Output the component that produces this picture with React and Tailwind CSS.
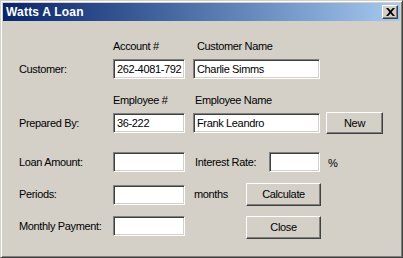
import React from 'react'

const FONT = { fontFamily: '"Liberation Sans", Arial, sans-serif' }

function TextBox({ value = '', width }) {
  return (
    <div
      className={`${width} h-[20px] shrink-0 bg-white border border-t-[#808080] border-l-[#808080] border-b-white border-r-white shadow-[inset_1px_1px_0_#404040,inset_-1px_-1px_0_#d4d0c8] flex items-center pl-[3px] text-[11px] tracking-[-0.35px] text-black overflow-hidden whitespace-nowrap`}
    >
      {value}
    </div>
  )
}

function Button({ children, width, height }) {
  return (
    <div
      className={`${width} ${height} shrink-0 bg-[#d4d0c8] border border-t-white border-l-white border-b-[#404040] border-r-[#404040] shadow-[inset_-1px_-1px_0_#808080] flex items-center justify-center text-[11px] tracking-[-0.35px] text-black`}
    >
      {children}
    </div>
  )
}

export default function App() {
  return (
    <div
      style={FONT}
      className="w-[403px] h-[258px] bg-[#d4d0c8] border border-t-[#d4d0c8] border-l-[#d4d0c8] border-b-[#404040] border-r-[#404040] shadow-[inset_1px_1px_0_#ffffff,inset_-1px_-1px_0_#808080] p-[2px] text-[11px] tracking-[-0.35px] text-black leading-[13px]"
    >
      {/* title bar */}
      <div className="h-[18px] flex items-center justify-between bg-gradient-to-r from-[#0a246a] to-[#a6caf0] pl-[3px] pr-[2px]">
        <span className="text-white font-bold text-[12px] tracking-[0.2px]">Watts A Loan</span>
        <div className="w-[16px] h-[14px] bg-[#d4d0c8] border border-t-white border-l-white border-b-[#404040] border-r-[#404040] shadow-[inset_-1px_-1px_0_#808080] flex items-center justify-center">
          <svg width="9" height="8" viewBox="0 0 9 8">
            <path d="M0 0h2.2l2.3 2.6L6.8 0H9L5.6 4 9 8H6.8L4.5 5.4 2.2 8H0l3.4-4z" fill="#000" />
          </svg>
        </div>
      </div>

      {/* body */}
      <div className="pl-[16px]">
        <div className="flex mt-[19px] h-[13px]">
          <div className="w-[94px]" />
          <div className="w-[84px]">Account #</div>
          <div>Customer Name</div>
        </div>

        <div className="flex items-center mt-[6px] h-[20px]">
          <div className="w-[94px]">Customer:</div>
          <TextBox width="w-[72px]" value="262-4081-792" />
          <div className="w-[8px]" />
          <TextBox width="w-[127px]" value="Charlie Simms" />
        </div>

        <div className="flex mt-[15px] h-[13px]">
          <div className="w-[94px]" />
          <div className="w-[82px]">Employee #</div>
          <div>Employee Name</div>
        </div>

        <div className="flex items-center mt-[5px] h-[22px]">
          <div className="w-[94px]">Prepared By:</div>
          <TextBox width="w-[72px]" value="36-222" />
          <div className="w-[8px]" />
          <TextBox width="w-[127px]" value="Frank Leandro" />
          <div className="w-[6px]" />
          <Button width="w-[57px]" height="h-[22px]">New</Button>
        </div>

        <div className="flex items-center mt-[18px] h-[20px]">
          <div className="w-[94px]">Loan Amount:</div>
          <TextBox width="w-[72px]" />
          <div className="w-[10px]" />
          <div className="w-[74px]">Interest Rate:</div>
          <TextBox width="w-[51px]" />
          <div className="ml-[8px] mt-[3px]">%</div>
        </div>

        <div className="flex items-center mt-[11px] h-[23px]">
          <div className="w-[94px]">Periods:</div>
          <TextBox width="w-[72px]" />
          <div className="w-[9px]" />
          <div className="w-[52px]">months</div>
          <Button width="w-[75px]" height="h-[23px]">Calculate</Button>
        </div>

        <div className="flex items-start mt-[10px]">
          <div className="w-[94px] h-[20px] flex items-center">Monthly Payment:</div>
          <TextBox width="w-[72px]" />
          <div className="w-[61px]" />
          <Button width="w-[75px]" height="h-[23px]">Close</Button>
        </div>
      </div>
    </div>
  )
}
